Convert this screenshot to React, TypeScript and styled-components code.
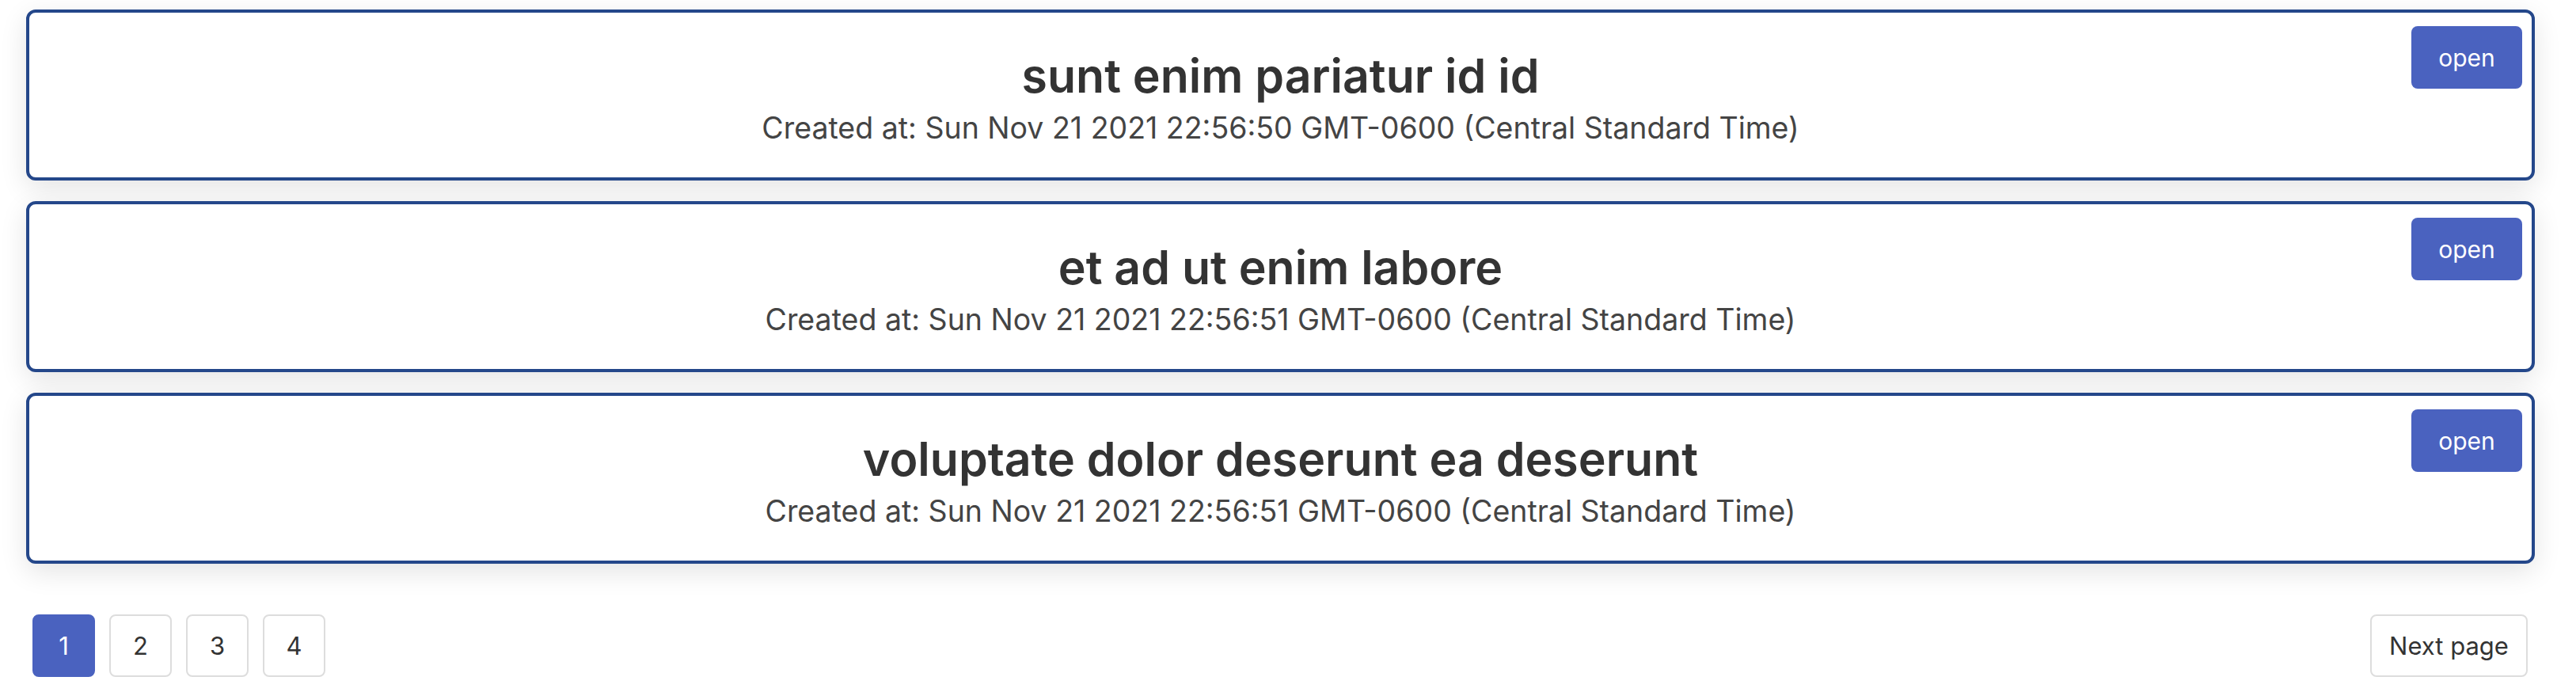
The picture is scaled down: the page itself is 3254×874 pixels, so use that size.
import React from "react";
import styled, { createGlobalStyle } from "styled-components";

const GlobalStyle = createGlobalStyle`
  body {
    margin: 0;
    background: #fff;
    font-family: Inter, "Noto Sans", sans-serif;
    color: #333;
  }
`;

const Page = styled.div`
  padding: 12px 52px 0 33px;
`;

const List = styled.div`
  display: flex;
  flex-direction: column;
  gap: 26px;
`;

const Card = styled.div`
  display: grid;
  grid-template-columns: 1fr auto 1fr;
  height: 216px;
  box-sizing: border-box;
  padding: 17px 12px 0;
  background: #fff;
  border: 4px solid #24478a;
  border-radius: 12px;
  box-shadow: 0 10px 34px rgba(0, 0, 0, 0.11);
`;

const CardBody = styled.div`
  grid-column: 2;
  text-align: center;
`;

const Title = styled.h2`
  margin: 28px 0 0;
  font-size: 59px;
  line-height: 70px;
  font-weight: 600;
  color: #333;
`;

const Subtitle = styled.p`
  margin: 7px 0 0;
  font-size: 37.5px;
  line-height: 48px;
  color: #444;
`;

const OpenButton = styled.button`
  grid-column: 3;
  justify-self: end;
  align-self: start;
  width: 140px;
  height: 79px;
  border: none;
  border-radius: 8px;
  background: #4a62bf;
  color: #fff;
  font-family: inherit;
  font-size: 30px;
`;

const Pager = styled.div`
  display: flex;
  justify-content: space-between;
  margin-top: 64px;
  padding: 0 9px 0 8px;
`;

const Pages = styled.div`
  display: flex;
  gap: 18px;
`;

const PageButton = styled.button<{ $active?: boolean }>`
  width: 79px;
  height: 79px;
  box-sizing: border-box;
  border: 2px solid ${(p) => (p.$active ? "#4a62bf" : "#ddd")};
  border-radius: 8px;
  background: ${(p) => (p.$active ? "#4a62bf" : "#fff")};
  color: ${(p) => (p.$active ? "#fff" : "#333")};
  font-family: inherit;
  font-size: 31px;
`;

const NextButton = styled.button`
  width: 199px;
  height: 79px;
  box-sizing: border-box;
  border: 2px solid #ddd;
  border-radius: 8px;
  background: #fff;
  color: #333;
  font-family: inherit;
  font-size: 31px;
`;

const todos = [
  { title: "sunt enim pariatur id id", created: "Sun Nov 21 2021 22:56:50 GMT-0600 (Central Standard Time)" },
  { title: "et ad ut enim labore", created: "Sun Nov 21 2021 22:56:51 GMT-0600 (Central Standard Time)" },
  { title: "voluptate dolor deserunt ea deserunt", created: "Sun Nov 21 2021 22:56:51 GMT-0600 (Central Standard Time)" },
];

export default function App() {
  return (
    <>
      <GlobalStyle />
      <Page>
        <List>
          {todos.map((t) => (
            <Card key={t.title}>
              <CardBody>
                <Title>{t.title}</Title>
                <Subtitle>Created at: {t.created}</Subtitle>
              </CardBody>
              <OpenButton>open</OpenButton>
            </Card>
          ))}
        </List>
        <Pager>
          <Pages>
            {[1, 2, 3, 4].map((n) => (
              <PageButton key={n} $active={n === 1}>
                {n}
              </PageButton>
            ))}
          </Pages>
          <NextButton>Next page</NextButton>
        </Pager>
      </Page>
    </>
  );
}
